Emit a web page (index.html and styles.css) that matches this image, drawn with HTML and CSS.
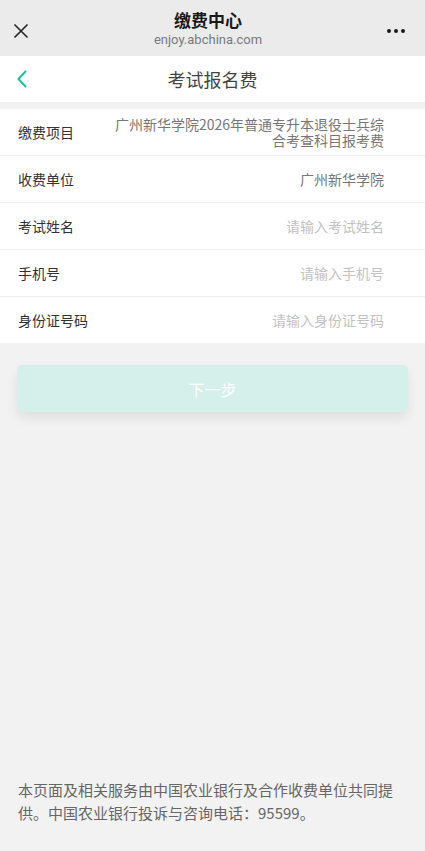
FILE: index.html
```html
<!DOCTYPE html>
<html>
<head>
  <meta charset="utf-8">
  <title>缴费中心</title>
  <link rel="stylesheet" href="styles.css">
</head>
<body>
  <div class="app">
    <div class="topbar">
      <svg class="close-icon" width="16" height="16" viewBox="0 0 16 16">
        <path d="M1.5 1.5 L14.5 14.5 M14.5 1.5 L1.5 14.5" stroke="#222" stroke-width="1.6" fill="none"/>
      </svg>
      <div class="topbar-title">
        <div class="site-name">缴费中心</div>
        <div class="site-url">enjoy.abchina.com</div>
      </div>
      <div class="more">
        <span></span><span></span><span></span>
      </div>
    </div>

    <div class="navbar">
      <svg class="back-icon" width="12" height="18" viewBox="0 0 12 18">
        <path d="M9.5 1.5 L2.5 9 L9.5 16.5" stroke="#1dbf9f" stroke-width="2" fill="none" stroke-linecap="round" stroke-linejoin="round"/>
      </svg>
      <div class="nav-title">考试报名费</div>
    </div>

    <div class="form">
      <div class="row">
        <div class="label">缴费项目</div>
        <div class="value">广州新华学院2026年普通专升本退役士兵综合考查科目报考费</div>
      </div>
      <div class="row">
        <div class="label">收费单位</div>
        <div class="value">广州新华学院</div>
      </div>
      <div class="row">
        <div class="label">考试姓名</div>
        <div class="value placeholder">请输入考试姓名</div>
      </div>
      <div class="row">
        <div class="label">手机号</div>
        <div class="value placeholder">请输入手机号</div>
      </div>
      <div class="row">
        <div class="label">身份证号码</div>
        <div class="value placeholder">请输入身份证号码</div>
      </div>
    </div>

    <div class="actions">
      <button class="next-btn" disabled>下一步</button>
    </div>

    <div class="footer">
      本页面及相关服务由中国农业银行及合作收费单位共同提供。中国农业银行投诉与咨询电话：95599。
    </div>
  </div>
</body>
</html>
```

FILE: styles.css
```css
html, body {
  margin: 0;
  padding: 0;
  height: 100%;
}

body {
  background-color: #f2f2f2;
  font-family: "Noto Sans CJK SC", "Noto Sans", sans-serif;
  color: #333;
}

.app {
  min-height: 100%;
  display: flex;
  flex-direction: column;
}

.topbar {
  height: 56px;
  background-color: #ebebeb;
  display: flex;
  align-items: center;
  padding: 0 20px 0 13px;
}

.close-icon {
  margin-top: 6px;
}

.topbar-title {
  flex: 1;
  text-align: center;
  padding-top: 1px;
}

.site-name {
  font-size: 17px;
  font-weight: bold;
  color: #1a1a1a;
  line-height: 22px;
}

.site-url {
  font-family: "Roboto", "Noto Sans", sans-serif;
  font-size: 13px;
  color: #7a7a7a;
  line-height: 18px;
}

.more {
  display: flex;
  gap: 3px;
  margin-top: 6px;
}

.more span {
  width: 4px;
  height: 4px;
  border-radius: 50%;
  background-color: #1a1a1a;
}

.navbar {
  height: 46px;
  background-color: white;
  display: flex;
  align-items: center;
  padding: 0 16px;
  position: relative;
}

.nav-title {
  position: absolute;
  left: 0;
  right: 0;
  text-align: center;
  font-size: 18px;
  color: #444;
  pointer-events: none;
}

.form {
  margin-top: 7px;
  background-color: white;
}

.row {
  min-height: 46px;
  display: flex;
  align-items: center;
  padding: 0 41px 0 18px;
  border-bottom: 1px solid #f0f0f0;
  font-size: 14px;
}

.row:last-child {
  border-bottom: none;
}

.label {
  flex-shrink: 0;
  color: #333;
  width: 94px;
}

.value {
  flex: 1;
  text-align: right;
  color: #777;
  line-height: 16px;
  padding: 7px 0;
}

.value.placeholder {
  color: #c2c2c2;
}

.actions {
  padding: 22px 17px 0;
}

.next-btn {
  width: 100%;
  height: 47px;
  border: none;
  border-radius: 5px;
  background-color: #d5efeb;
  color: white;
  font-family: "Noto Sans CJK SC", sans-serif;
  font-size: 16px;
  box-shadow: 0 6px 12px rgba(0, 0, 0, 0.08);
}

.footer {
  margin-top: auto;
  padding: 0 18px 27px;
  font-size: 15px;
  line-height: 23px;
  color: #666;
}
```
